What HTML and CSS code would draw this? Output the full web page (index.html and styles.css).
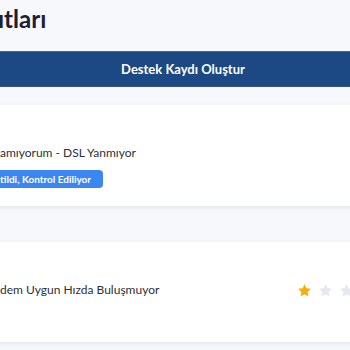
FILE: index.html
```html
<!DOCTYPE html>
<html lang="tr">
<head>
<meta charset="utf-8">
<title>Destek Kayıtları</title>
<link rel="stylesheet" href="styles.css">
</head>
<body>
<main class="page">
  <h1 class="title"><span class="cut">Destek Kay</span>ıtları</h1>
  <button class="create-btn" type="button">Destek Kaydı Oluştur</button>
  <section class="list">
    <article class="card card-open">
      <div class="card-body">
        <h2 class="card-title"><span class="cut">İnternete Bağlan</span>amıyorum - DSL Yanmıyor</h2>
        <span class="badge"><span class="cut">Teknik Ekibe İle</span>tildi, Kontrol Ediliyor</span>
      </div>
    </article>
    <article class="card card-closed">
      <div class="card-row">
        <h2 class="card-title"><span class="cut">Mo</span>dem Uygun Hızda Buluşmuyor</h2>
        <div class="stars" aria-label="1 / 5">
          <svg class="star on" viewBox="0 0 24 24"><path d="M12 1.8l3.1 6.6 7.2.9-5.3 5 1.4 7.1L12 17.9l-6.4 3.5 1.4-7.1-5.3-5 7.2-.9z"/></svg>
          <svg class="star" viewBox="0 0 24 24"><path d="M12 1.8l3.1 6.6 7.2.9-5.3 5 1.4 7.1L12 17.9l-6.4 3.5 1.4-7.1-5.3-5 7.2-.9z"/></svg>
          <svg class="star" viewBox="0 0 24 24"><path d="M12 1.8l3.1 6.6 7.2.9-5.3 5 1.4 7.1L12 17.9l-6.4 3.5 1.4-7.1-5.3-5 7.2-.9z"/></svg>
          <svg class="star" viewBox="0 0 24 24"><path d="M12 1.8l3.1 6.6 7.2.9-5.3 5 1.4 7.1L12 17.9l-6.4 3.5 1.4-7.1-5.3-5 7.2-.9z"/></svg>
          <svg class="star" viewBox="0 0 24 24"><path d="M12 1.8l3.1 6.6 7.2.9-5.3 5 1.4 7.1L12 17.9l-6.4 3.5 1.4-7.1-5.3-5 7.2-.9z"/></svg>
        </div>
      </div>
    </article>
  </section>
</main>
</body>
</html>
```
FILE: styles.css
```css
html, body {
  margin: 0;
  padding: 0;
}
body {
  background: #f7f8fb;
  font-family: Lato, "Open Sans", sans-serif;
  overflow: hidden;
  width: 350px;
  height: 350px;
}
.page {
  display: flex;
  flex-direction: column;
  width: 462px;
  margin-left: -48px;
  padding-top: 4px;
}
.cut {
  display: inline-block;
  width: 0;
  direction: rtl;
  white-space: nowrap;
}
.title {
  margin: 0 0 17px;
  padding-left: 46px;
  font-size: 24px;
  line-height: 30px;
  font-weight: 700;
  color: #1c2034;
  white-space: nowrap;
}
.create-btn {
  height: 36px;
  border: 0;
  margin: 0;
  padding: 0;
  background: #1c4884;
  box-shadow: inset 0 1px 0 #4b6489, inset 0 -1px 0 #30548a;
  color: #fff;
  font-family: Lato, "Open Sans", sans-serif;
  font-size: 13px;
  font-weight: 700;
  text-align: center;
}
.list {
  display: flex;
  flex-direction: column;
  gap: 36px;
  margin-top: 18px;
}
.card {
  background: #fff;
  box-shadow: 0 2px 6px rgba(40, 50, 120, 0.09);
  padding-left: 48px;
  padding-right: 18px;
}
.card-open {
  height: 101px;
  box-sizing: border-box;
  padding-top: 40px;
}
.card-body {
  display: flex;
  flex-direction: column;
  align-items: flex-start;
  gap: 9px;
}
.card-title {
  margin: 0;
  font-size: 12px;
  line-height: 16px;
  font-weight: 400;
  color: #2e3037;
  white-space: nowrap;
}
.badge {
  margin-left: -12px;
  padding: 0 12px;
  height: 18px;
  line-height: 18px;
  border-radius: 4px;
  background: #3a86f2;
  color: #fff;
  font-size: 10px;
  font-weight: 700;
  white-space: nowrap;
}
.card-closed {
  height: 100px;
  box-sizing: border-box;
  padding-top: 40px;
}
.card-row {
  display: flex;
  align-items: center;
  justify-content: space-between;
}
.stars {
  display: flex;
  gap: 6px;
}
.star {
  width: 15px;
  height: 15px;
  fill: #e6e8ef;
}
.star.on {
  fill: #f5af0c;
}
```
